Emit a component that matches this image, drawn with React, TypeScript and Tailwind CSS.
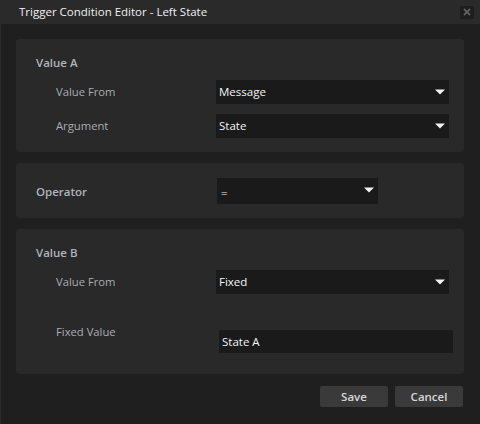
import type { ReactNode } from 'react';

const FONT = "font-['Segoe_UI','Open_Sans','Noto_Sans',sans-serif]";

function Arrow({ className = '' }: { className?: string }) {
  return (
    <svg width="10" height="6" viewBox="0 0 10 6" className={className}>
      <path d="M0 0.5 H10 L5 5.5 Z" fill="#f2f2f2" />
    </svg>
  );
}

function Dropdown({ value, className = '' }: { value: string; className?: string }) {
  return (
    <div className={`relative flex items-center bg-[#1a1a1a] pl-[3px] text-[11.5px] text-[#f4f4f4] ${className}`}>
      <span>{value}</span>
      <Arrow className="absolute right-[4px] top-[9px]" />
    </div>
  );
}

function Panel({ children, className = '' }: { children: ReactNode; className?: string }) {
  return <div className={`mx-[16px] rounded-[3px] bg-[#292929] ${className}`}>{children}</div>;
}

function Heading({ children }: { children: ReactNode }) {
  return <div className="h-[16px] pl-[20px] text-[11.5px] font-semibold leading-[16px] text-[#aeb5bc]">{children}</div>;
}

function SubRow({ label, children }: { label: string; children: ReactNode }) {
  return (
    <div className="flex items-center">
      <div className="w-[200px] pl-[40px] text-[11.25px] text-[#a8adb2]">{label}</div>
      {children}
    </div>
  );
}

export default function App() {
  return (
    <div className={`${FONT} flex h-[424px] w-[480px] flex-col bg-[#1f1f1f] shadow-[inset_1px_0_0_#2c2c2c]`}>
      {/* title bar */}
      <div className="flex h-[24px] items-center justify-between bg-[#2a2a2a] pl-[19px] pr-[6px]">
        <span className="text-[11.5px] text-[#f0f0f0]">Trigger Condition Editor - Left State</span>
        <div className="flex h-[13px] w-[14px] items-center justify-center bg-[#1e1e1e]">
          <svg width="8" height="8" viewBox="0 0 8 8">
            <path d="M1 1 L7 7 M7 1 L1 7" stroke="#5e5e5e" strokeWidth="1.8" />
          </svg>
        </div>
      </div>

      {/* Value A */}
      <Panel className="mt-[15px] h-[113px] pt-[16px]">
        <Heading>Value A</Heading>
        <div className="mt-[9px] flex flex-col gap-[10px]">
          <SubRow label="Value From">
            <Dropdown value="Message" className="h-[24px] w-[233px]" />
          </SubRow>
          <SubRow label="Argument">
            <Dropdown value="State" className="h-[24px] w-[233px]" />
          </SubRow>
        </div>
      </Panel>

      {/* Operator */}
      <Panel className="mt-[11px] flex h-[55px] items-center">
        <div className="w-[201px] pl-[20px] pt-[3px] text-[11.5px] font-semibold text-[#aeb5bc]">Operator</div>
        <div className="relative flex h-[26px] w-[161px] items-center bg-[#1a1a1a] pl-[4px] pt-[4px] text-[11.5px] text-[#f4f4f4]">
          <span>=</span>
          <Arrow className="absolute right-[4px] top-[9px]" />
        </div>
      </Panel>

      {/* Value B */}
      <Panel className="mt-[11px] h-[145px] pt-[16px]">
        <Heading>Value B</Heading>
        <div className="mt-[9px]">
          <SubRow label="Value From">
            <Dropdown value="Fixed" className="h-[24px] w-[233px]" />
          </SubRow>
        </div>
        <div className="mt-[30px] flex items-start">
          <div className="w-[203px] pl-[40px] text-[11.25px] leading-[16px] text-[#a8adb2]">Fixed Value</div>
          <div className="mt-[6px] flex h-[23px] w-[234px] items-center bg-[#1a1a1a] pl-[3px] text-[11.5px] text-[#f4f4f4]">
            State A
          </div>
        </div>
      </Panel>

      {/* buttons */}
      <div className="mt-[12px] flex justify-end gap-[7px] pr-[17px]">
        <button className="h-[21px] w-[68px] rounded-[2px] bg-[#3a3a3a] text-[11.5px] font-semibold text-[#d8d8d8]">Save</button>
        <button className="h-[21px] w-[68px] rounded-[2px] bg-[#3a3a3a] text-[11.5px] font-semibold text-[#d8d8d8]">Cancel</button>
      </div>
    </div>
  );
}
